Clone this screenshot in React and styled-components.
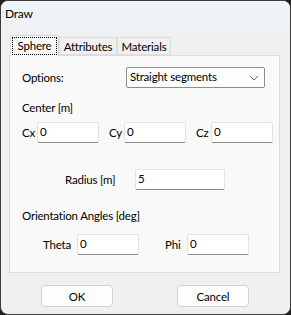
import styled, { createGlobalStyle } from 'styled-components';

const GlobalStyle = createGlobalStyle`
	html, body {
		margin: 0;
		padding: 0;
		background: #1e1e1e;
	}
	* {
		box-sizing: border-box;
	}
`;

const Chevron = () => (
	<svg width="10" height="6" viewBox="0 0 10 6">
		<polyline points="1,1 5,5 9,1" fill="none" stroke="#666" strokeWidth="1" />
	</svg>
);

const Field = ({ label, value, labelWidth, inputWidth }) => (
	<FieldGroup>
		<Label style={{ width: labelWidth }}>{label}</Label>
		<TextInput value={value} readOnly style={{ width: inputWidth }} />
	</FieldGroup>
);

const App = () => {
	const tabs = ['Sphere', 'Attributes', 'Materials'];
	return (
		<>
			<GlobalStyle />
			<Window>
				<TitleBar>Draw</TitleBar>
				<Body>
					<TabRow>
						{tabs.map((tab, idx) => (
							<Tab key={tab} $active={idx === 0} $width={[49, 58, 54][idx]}>
								<span className={idx === 0 ? 'focus' : ''}>{tab}</span>
							</Tab>
						))}
					</TabRow>
					<Panel>
						<OptionsRow>
							<Label style={{ width: 104 }}>Options:</Label>
							<Select>
								<span>Straight segments</span>
								<Chevron />
							</Select>
						</OptionsRow>
						<Heading $top={12}>Center [m]</Heading>
						<Row $top={6}>
							<Field label="Cx" value="0" labelWidth={15} inputWidth={62} />
							<Field label="Cy" value="0" labelWidth={15} inputWidth={62} />
							<Field label="Cz" value="0" labelWidth={15} inputWidth={62} />
						</Row>
						<Row $top={26} $indent={43}>
							<Field label="Radius [m]" value="5" labelWidth={70} inputWidth={90} />
						</Row>
						<Heading $top={18}>Orientation Angles [deg]</Heading>
						<Row $top={10} $indent={21} $gap={26}>
							<Field label="Theta" value="0" labelWidth={34} inputWidth={62} />
							<Field label="Phi" value="0" labelWidth={22} inputWidth={62} />
						</Row>
					</Panel>
					<Footer>
						<Button>OK</Button>
						<Button>Cancel</Button>
					</Footer>
				</Body>
			</Window>
		</>
	);
};

const Window = styled.div`
	width: 291px;
	height: 315px;
	background: #f0f0f0;
	border: 1px solid #3c3c3c;
	border-radius: 8px;
	overflow: hidden;
	font-family: Lato, 'Noto Sans', sans-serif;
	font-size: 11.5px;
	letter-spacing: -0.2px;
	color: #000;
`;

const TitleBar = styled.div`
	height: 24px;
	background: #eef3f8;
	padding: 0 0 0 4px;
	line-height: 26px;
	font-size: 12px;
`;

const Body = styled.div`
	padding: 10px 10px 0 8px;
`;

const TabRow = styled.div`
	display: flex;
	align-items: flex-end;
	height: 20px;
	padding-left: 1px;
	position: relative;
	z-index: 1;
`;

const Tab = styled.div`
	width: ${(p) => p.$width}px;
	height: ${(p) => (p.$active ? 21 : 18)}px;
	margin-bottom: ${(p) => (p.$active ? -1 : 0)}px;
	background: ${(p) => (p.$active ? '#f9f9f9' : '#f0f0f0')};
	border: 1px solid #dcdcdc;
	border-bottom: ${(p) => (p.$active ? 'none' : '1px solid #dcdcdc')};
	display: flex;
	align-items: center;
	justify-content: center;
	line-height: 15px;

	.focus {
		outline: 1px dotted #000;
		padding: 0 5px;
		line-height: 16px;
		margin-top: -1px;
	}
`;

const Panel = styled.div`
	height: 218px;
	background: #f9f9f9;
	border: 1px solid #dcdcdc;
	padding: 11px 0 0 12px;
`;

const Label = styled.span`
	display: inline-block;
	flex-shrink: 0;
	white-space: nowrap;
`;

const OptionsRow = styled.div`
	display: flex;
	align-items: center;
	height: 21px;
`;

const Select = styled.div`
	width: 139px;
	height: 21px;
	background: #fdfdfd;
	border: 1px solid #8d8d8d;
	border-radius: 2px;
	display: flex;
	align-items: center;
	justify-content: space-between;
	padding: 0 5px 0 3px;
	line-height: 16px;

	span {
		margin-top: -2px;
	}
`;

const Heading = styled.div`
	margin-top: ${(p) => p.$top}px;
	height: 16px;
	line-height: 16px;
`;

const Row = styled.div`
	display: flex;
	align-items: center;
	gap: ${(p) => p.$gap ?? 10}px;
	margin-top: ${(p) => p.$top}px;
	padding-left: ${(p) => p.$indent ?? 0}px;
	height: 21px;
`;

const FieldGroup = styled.div`
	display: flex;
	align-items: center;
`;

const TextInput = styled.input`
	height: 21px;
	border: 1px solid #e3e3e3;
	border-bottom-color: #8a8a8a;
	border-radius: 2px;
	background: #fff;
	font: inherit;
	letter-spacing: inherit;
	padding: 0 2px 2px;
	outline: none;
`;

const Footer = styled.div`
	display: flex;
	gap: 64px;
	padding: 12px 0 0 32px;
`;

const Button = styled.button`
	width: 72px;
	height: 22px;
	background: #fdfdfd;
	border: 1px solid #d0d0d0;
	border-radius: 4px;
	font: inherit;
	letter-spacing: inherit;
	color: #000;
	padding: 0;
`;

export default App;
